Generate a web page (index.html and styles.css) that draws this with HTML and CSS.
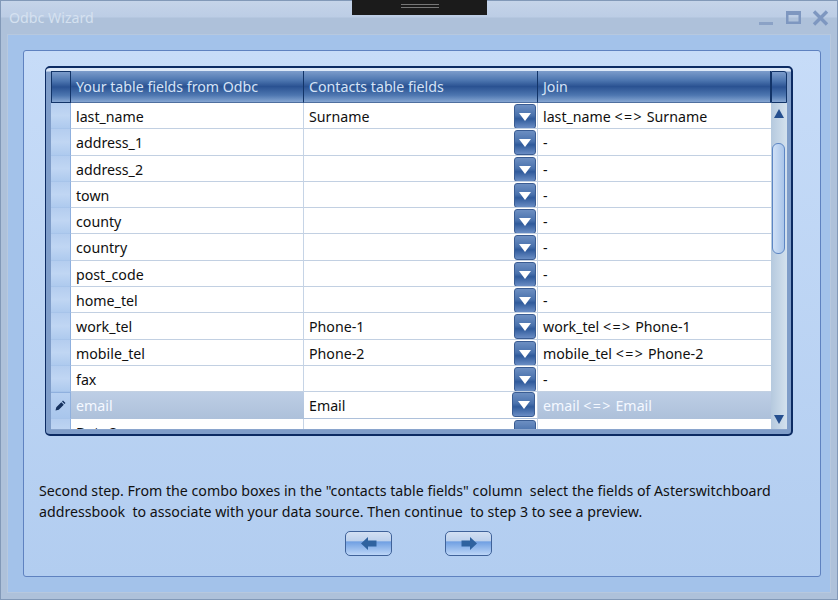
FILE: index.html
```html
<!DOCTYPE html>
<html>
<head>
<meta charset="utf-8">
<title>Odbc Wizard</title>
<link rel="stylesheet" href="styles.css">
</head>
<body>
<div class="window">
  <div class="grip"><span class="grip-lines"></span></div>
  <header class="titlebar">
    <span class="title">Odbc Wizard</span>
    <div class="controls">
      <svg width="18" height="16" viewBox="0 0 18 16"><rect x="1" y="12" width="14" height="3" fill="#8ba2c6"/></svg>
      <svg width="18" height="16" viewBox="0 0 18 16"><path d="M1 1h15v13H1z M3.500 5v6.500h10V5z" fill="#7e97c0" fill-rule="evenodd"/></svg>
      <svg width="18" height="16" viewBox="0 0 18 16"><path d="M2 1.500l13 13M15 1.500L2 14.500" stroke="#7e97c0" stroke-width="3.400" fill="none"/></svg>
    </div>
  </header>
  <main class="frame">
    <section class="panel">
      <div class="grid">
        <div class="head">
          <div class="hcell ind"></div>
          <div class="hcell c1">Your table fields from Odbc</div>
          <div class="hcell c2">Contacts table fields</div>
          <div class="hcell c3">Join</div>
          <div class="hcell sb"></div>
        </div>
        <div class="content">
          <div class="rows">
            <div class="row"><div class="ind"></div><div class="c1 cell">last_name</div><div class="c2 cell combo">Surname<span class="drop"><i></i></span></div><div class="c3 cell">last_name <span class="op">&lt;=&gt;</span> Surname</div></div>
            <div class="row"><div class="ind"></div><div class="c1 cell">address_1</div><div class="c2 cell combo"><span class="drop"><i></i></span></div><div class="c3 cell">-</div></div>
            <div class="row"><div class="ind"></div><div class="c1 cell">address_2</div><div class="c2 cell combo"><span class="drop"><i></i></span></div><div class="c3 cell">-</div></div>
            <div class="row"><div class="ind"></div><div class="c1 cell">town</div><div class="c2 cell combo"><span class="drop"><i></i></span></div><div class="c3 cell">-</div></div>
            <div class="row"><div class="ind"></div><div class="c1 cell">county</div><div class="c2 cell combo"><span class="drop"><i></i></span></div><div class="c3 cell">-</div></div>
            <div class="row"><div class="ind"></div><div class="c1 cell">country</div><div class="c2 cell combo"><span class="drop"><i></i></span></div><div class="c3 cell">-</div></div>
            <div class="row"><div class="ind"></div><div class="c1 cell">post_code</div><div class="c2 cell combo"><span class="drop"><i></i></span></div><div class="c3 cell">-</div></div>
            <div class="row"><div class="ind"></div><div class="c1 cell">home_tel</div><div class="c2 cell combo"><span class="drop"><i></i></span></div><div class="c3 cell">-</div></div>
            <div class="row"><div class="ind"></div><div class="c1 cell">work_tel</div><div class="c2 cell combo">Phone-1<span class="drop"><i></i></span></div><div class="c3 cell">work_tel <span class="op">&lt;=&gt;</span> Phone-1</div></div>
            <div class="row"><div class="ind"></div><div class="c1 cell">mobile_tel</div><div class="c2 cell combo">Phone-2<span class="drop"><i></i></span></div><div class="c3 cell">mobile_tel <span class="op">&lt;=&gt;</span> Phone-2</div></div>
            <div class="row"><div class="ind"></div><div class="c1 cell">fax</div><div class="c2 cell combo"><span class="drop"><i></i></span></div><div class="c3 cell">-</div></div>
            <div class="row selected"><div class="ind"><svg width="11" height="11" viewBox="0 0 11 11"><path d="M0.500 10.500l0.800-3.300 5-5 2.500 2.500-5 5z M7 1.500l1-1 2.500 2.500-1 1z" fill="#16325f"/></svg></div><div class="c1 cell">email</div><div class="c2 cell combo">Email<span class="drop"><i></i></span></div><div class="c3 cell">email <span class="op">&lt;=&gt;</span> Email</div></div>
            <div class="row"><div class="ind"></div><div class="c1 cell">DataOra</div><div class="c2 cell combo"><span class="drop"><i></i></span></div><div class="c3 cell"></div></div>
          </div>
          <div class="scrollbar">
            <svg class="arrow" width="10" height="9" viewBox="0 0 10 9"><path d="M5 0l5 9H0z" fill="#254f8f"/></svg>
            <div class="thumb"></div>
            <svg class="arrow down" width="10" height="9" viewBox="0 0 10 9"><path d="M0 0h10L5 9z" fill="#254f8f"/></svg>
          </div>
        </div>
      </div>
      <p class="hint">Second step. From the combo boxes in the "contacts table fields" column&nbsp; select the fields of Asterswitchboard addressbook&nbsp; to associate with your data source. Then continue&nbsp; to step 3 to see a preview.</p>
      <nav class="nav">
        <button class="navbtn" aria-label="Back"><svg width="16" height="13" viewBox="0 0 16 13"><path d="M0 6.500L7 0v3.500h8.500v6H7V13z" fill="#2f629f"/></svg></button>
        <button class="navbtn" aria-label="Next"><svg width="16" height="13" viewBox="0 0 16 13"><path d="M16 6.500L9 0v3.500H0.500v6H9V13z" fill="#2f629f"/></svg></button>
      </nav>
    </section>
  </main>
</div>
</body>
</html>
```
FILE: styles.css
```css
* { box-sizing: border-box; }
html, body { margin: 0; height: 100%; }
body { font-family: "Noto Sans", "Open Sans", sans-serif; font-size: 14.2px; overflow: hidden; }
.window {
  position: relative;
  width: 838px; height: 600px;
  display: flex; flex-direction: column;
  border: 1px solid #8299b8;
  background: linear-gradient(#c5d4e9 0, #bccde5 16px, #aec1da 17px, #aec1da 100%);
  padding: 0 6px 6px 6px;
}
.grip {
  position: absolute; left: 351px; top: -1px;
  width: 135px; height: 15px; background: #1b1b1b;
  display: flex; justify-content: center; padding-top: 4px;
}
.grip-lines { display: block; width: 38px; height: 4px; border-top: 1px solid #777; border-bottom: 1px solid #777; }
.titlebar {
  height: 33px; flex: none;
  display: flex; justify-content: space-between; align-items: flex-start;
}
.title { color: #d5e1f0; font-size: 14.200px; margin: 7px 0 0 2px; line-height: 20px; }
.controls { display: flex; gap: 9px; margin: 9px 1px 0 0; align-items: flex-start; }
.frame {
  flex: 1; min-height: 0;
  background: #a3c2ea;
  border: 1px solid #b7c8de;
  padding: 15px;
  display: flex;
}
.panel {
  flex: 1;
  border: 1px solid #5f82c0;
  border-radius: 3px;
  background: linear-gradient(#c7dcf8, #b2cdf0);
  padding: 15px 21px 0 21px;
  display: flex; flex-direction: column;
}
.grid {
  width: 748px; height: 370px; flex: none;
  border: 1px solid #0c2b63;
  border-width: 2px 2px 2px 1px;
  border-radius: 5px;
  background: linear-gradient(#dbe7f7 0, #dbe7f7 3px, #7f9dc9 4px);
  padding: 3px 4px 4px 5px;
  display: flex; flex-direction: column;
  overflow: hidden;
}
.head { display: flex; height: 32px; flex: none; }
.hcell {
  color: #d5e3f6;
  line-height: 31px;
  padding-left: 5px;
  white-space: nowrap;
  border-right: 1px solid #123468;
  background: linear-gradient(#7c9ccb 0, #4d76b0 30%, #2a5292 50%, #4d76b0 78%, #86a6d2 100%);
  border-bottom: 1px solid #4f6f9f;
}
.ind { width: 20px; flex: none; }
.hcell.ind { padding: 0; border: 1px solid #123468; }
.c1, .c2, .c3 { flex: none; }
.c1 { width: 233px; }
.c2 { width: 234px; }
.c3 { width: 233px; }
.hcell.sb { width: 16px; flex: none; padding: 0; border: 1px solid #123468; border-top-right-radius: 3px; }
.content { display: flex; height: 327px; flex: none; overflow: hidden; border-bottom: 1px solid #8aa5cd; }
.rows { width: 720px; flex: none; overflow: hidden; background: #fff; }
.row { display: flex; height: 26.300px; color: #101010; }
.row .ind {
  background: linear-gradient(#b4cdef, #c0d6f3 50%, #aecaee);
  border-bottom: 1px solid #a7c4ea;
  border-right: 1px solid #8fb0de;
  display: flex; align-items: center; justify-content: center;
}
.cell {
  line-height: 27px;
  padding-left: 5px;
  white-space: nowrap;
  background: #fff;
  border-bottom: 1px solid #c2d0e2;
  border-right: 1px solid #c6d4e6;
  overflow: hidden;
}
.op { letter-spacing: 1.400px; }
.row .c3 { border-right: 0; }
.combo { position: relative; }
.drop {
  position: absolute; right: 1px; top: 1px;
  width: 22px; height: 25px;
  border: 1px solid #3a5c92;
  border-radius: 3px;
  background: linear-gradient(#6d8fc2 0, #4a72ad 45%, #2f5a9b 60%, #6a8dc4 100%);
  display: flex; justify-content: center; padding-top: 8px;
}
.drop i {
  display: block; width: 0; height: 0;
  border-left: 6px solid transparent;
  border-right: 6px solid transparent;
  border-top: 8px solid #fff;
}
.row.selected .c1, .row.selected .c3 {
  background: linear-gradient(#bdcee5, #adc0da);
  color: #f4f8ff;
  border: 0;
}
.row.selected .drop { right: 2px; width: 23px; top: 0; }
.row.selected .c2 { border-bottom-color: #adc0da; }
.row.selected .ind { background: linear-gradient(#b7d0f1, #a9c6ec); border-top: 1px solid #8fb0de; }
.scrollbar {
  width: 16px; flex: none;
  position: relative;
  background: linear-gradient(90deg, #b5c9de, #d3e1ee);
}
.arrow { position: absolute; left: 3px; top: 6px; }
.arrow.down { top: auto; bottom: 5px; }
.thumb {
  position: absolute; left: 1px; top: 40px;
  width: 13px; height: 111px;
  border: 1px solid #5d86c4;
  border-radius: 6px;
  background: linear-gradient(90deg, #cfe0f6, #a9c5ea);
}
.hint { margin: 44px 0 0 -6px; width: 760px; color: #111; line-height: 21px; }
.nav { display: flex; justify-content: center; gap: 53px; margin: 9px 0 0 -7px; }
.navbtn {
  width: 47px; height: 25px;
  border: 1px solid #3f6299;
  border-radius: 5px;
  padding: 0;
  display: flex; align-items: center; justify-content: center;
  background: linear-gradient(#d3e0f3 0, #bcd0ec 40%, #6f9fe2 42%, #bdd6f7 100%);
}
```
